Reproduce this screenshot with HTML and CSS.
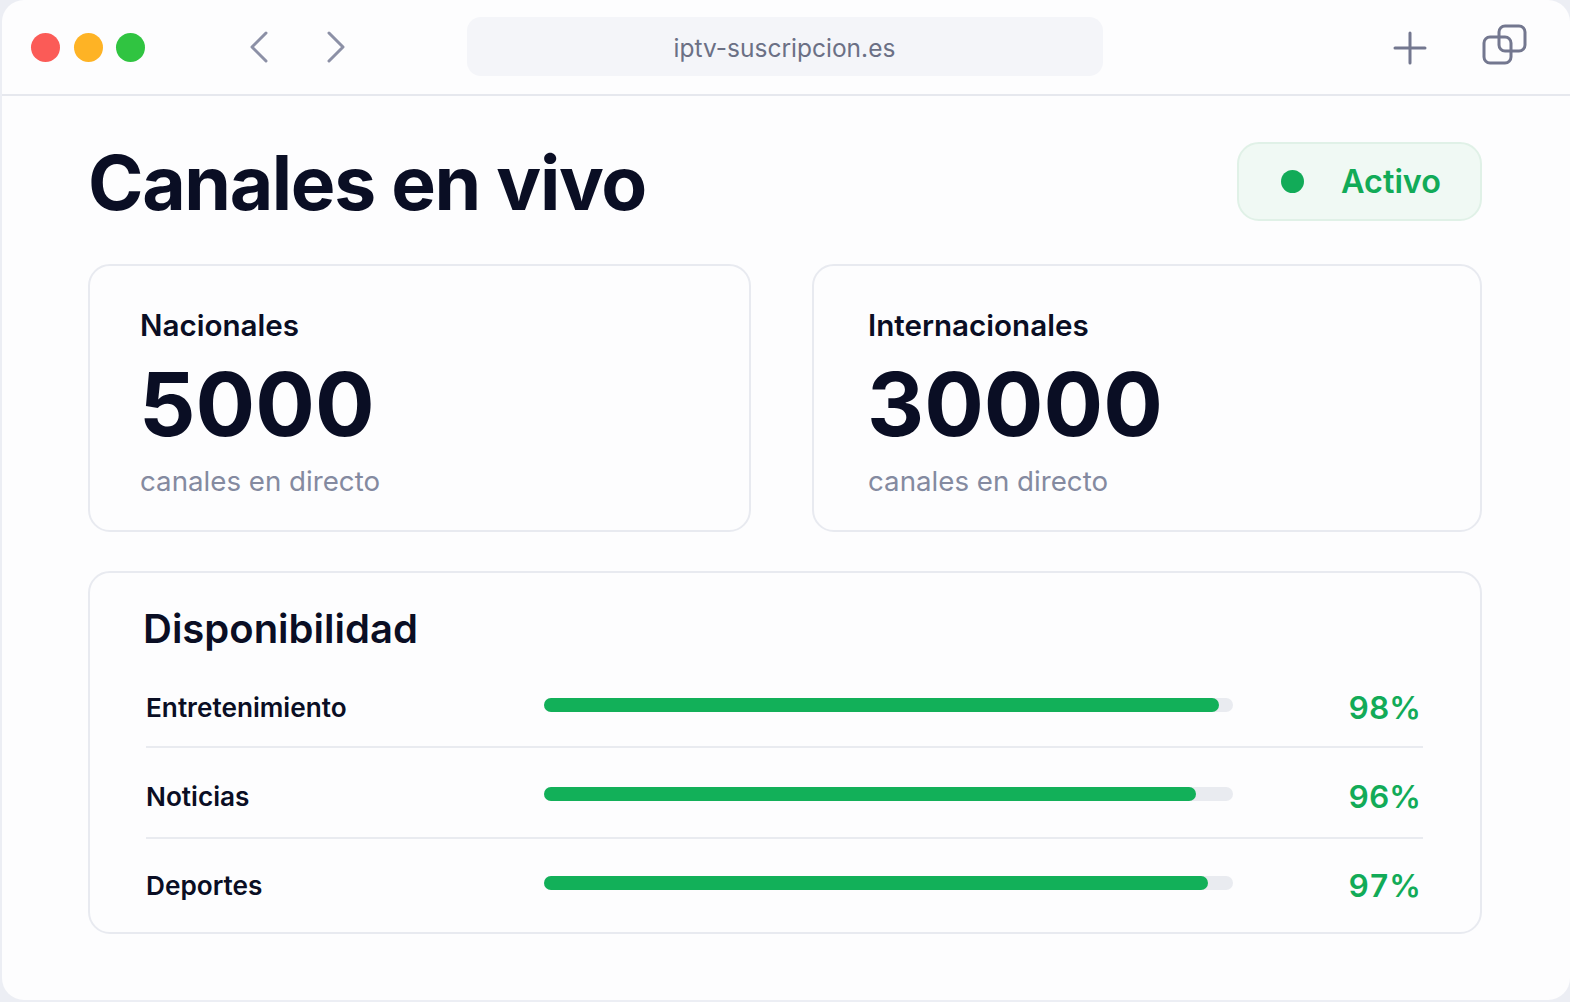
FILE: index.html
```html
<!DOCTYPE html>
<html lang="es">
<head>
  <meta charset="UTF-8" />
  <meta name="viewport" content="width=device-width, initial-scale=1.0" />
  <title>Canales en vivo</title>
  <link rel="stylesheet" href="styles.css">
</head>
<body>
  <div class="window">
    <header class="toolbar">
      <div class="dots">
        <span class="dot red"></span>
        <span class="dot yellow"></span>
        <span class="dot green"></span>
      </div>
      <div class="nav">
        <svg width="20" height="32" viewBox="0 0 20 32"><path d="M17 2 3 16l14 14" /></svg>
        <svg width="20" height="32" viewBox="0 0 20 32"><path d="M3 2l14 14L3 30" /></svg>
      </div>
      <div class="address">iptv-suscripcion.es</div>
      <div class="actions">
        <svg class="plus" width="34" height="34" viewBox="0 0 34 34"><path d="M17 2v30M2 17h30" /></svg>
        <svg class="tabs" width="46" height="42" viewBox="0 0 46 42">
          <rect x="17" y="2" width="26" height="25" rx="6" />
          <rect x="2" y="13" width="27" height="26" rx="6" />
        </svg>
      </div>
    </header>

    <main class="content">
      <div class="top">
        <h1>Canales en vivo</h1>
        <div class="badge"><span class="badge-dot"></span>Activo</div>
      </div>

      <div class="cards">
        <section class="card">
          <h3>Nacionales</h3>
          <div class="number">5000</div>
          <p>canales en directo</p>
        </section>
        <section class="card">
          <h3>Internacionales</h3>
          <div class="number">30000</div>
          <p>canales en directo</p>
        </section>
      </div>

      <section class="panel">
        <h2>Disponibilidad</h2>
        <div class="row">
          <span class="name">Entretenimiento</span>
          <div class="bar"><div class="fill" style="width: 98%"></div></div>
          <span class="pct">98%</span>
        </div>
        <div class="row">
          <span class="name">Noticias</span>
          <div class="bar"><div class="fill" style="width: 94.7%"></div></div>
          <span class="pct">96%</span>
        </div>
        <div class="row">
          <span class="name">Deportes</span>
          <div class="bar"><div class="fill" style="width: 96.3%"></div></div>
          <span class="pct">97%</span>
        </div>
      </section>
    </main>
  </div>
</body>
</html>
```

FILE: styles.css
```css
html, body {
  margin: 0;
  padding: 0;
}
body {
  width: 1570px;
  height: 1002px;
  overflow: hidden;
  background-color: #eceef4;
  font-family: Inter, 'Noto Sans', sans-serif;
  color: #0a0e24;
}
.window {
  box-sizing: border-box;
  width: 1568px;
  height: 1000px;
  margin-left: 2px;
  background-color: #fdfdfe;
  border-radius: 22px;
  overflow: hidden;
}
.toolbar {
  box-sizing: border-box;
  height: 96px;
  border-bottom: 2px solid #e6e8ee;
  display: flex;
  align-items: center;
}
.dots {
  display: flex;
  gap: 13.5px;
  margin-left: 29px;
}
.dot {
  width: 29px;
  height: 29px;
  border-radius: 50%;
}
.red { background-color: #fb5b57; }
.yellow { background-color: #feb325; }
.green { background-color: #30c441; }
.nav {
  display: flex;
  gap: 57px;
  margin-left: 103.5px;
}
.nav svg path {
  fill: none;
  stroke: #8c90a6;
  stroke-width: 3;
  stroke-linecap: round;
  stroke-linejoin: round;
}
.address {
  width: 636px;
  height: 59px;
  margin-left: 121px;
  margin-top: -2px;
  border-radius: 14px;
  background-color: #f4f5f9;
  color: #6b7085;
  font-size: 24.5px;
  line-height: 62px;
  text-align: center;
}
.actions {
  display: flex;
  align-items: center;
  margin-left: 290px;
  margin-top: 2px;
  gap: 55px;
}
.actions svg path,
.actions svg rect {
  fill: none;
  stroke: #73778f;
  stroke-width: 3;
  stroke-linecap: round;
}
.tabs {
  margin-top: -6px;
}
.content {
  padding: 46px 88px 0 86px;
}
.top {
  display: flex;
  justify-content: space-between;
  align-items: flex-start;
  height: 122px;
}
h1 {
  margin: -3px 0 0;
  font-size: 75px;
  font-weight: 700;
  line-height: 88px;
  letter-spacing: -1.35px;
}
.badge {
  box-sizing: border-box;
  width: 245px;
  height: 79px;
  display: flex;
  align-items: center;
  padding-left: 42px;
  gap: 37px;
  border: 2px solid #e0f1e7;
  border-radius: 22px;
  background-color: #f0f9f4;
  color: #12ab58;
  font-size: 32.4px;
  font-weight: 600;
}
.badge-dot {
  width: 23px;
  height: 23px;
  border-radius: 50%;
  background-color: #12ab58;
}
.cards {
  display: grid;
  grid-template-columns: 663px 670px;
  gap: 61px;
}
.card {
  box-sizing: border-box;
  height: 268px;
  padding: 41px 50px 0;
  border: 2px solid #e8eaf0;
  border-radius: 22px;
}
.card + .card {
  padding-left: 54px;
}
.card h3 {
  margin: 0;
  font-size: 29.6px;
  font-weight: 600;
  line-height: 36px;
}
.number {
  margin: 11px 0 0 -1px;
  font-size: 88.5px;
  font-weight: 700;
  line-height: 100px;
}
.card p {
  margin: 9px 0 0;
  font-size: 27.7px;
  line-height: 36px;
  color: #848aa0;
}
.panel {
  box-sizing: border-box;
  height: 363px;
  margin-top: 39px;
  padding: 30px 57px 0 56px;
  border: 2px solid #e8eaf0;
  border-radius: 22px;
}
h2 {
  margin: 0 0 11px -3px;
  font-size: 40px;
  font-weight: 600;
  line-height: 52px;
}
.row {
  display: grid;
  grid-template-columns: 398px 689px 1fr;
  align-items: center;
  height: 91px;
  padding-top: 7px;
  box-sizing: border-box;
  border-bottom: 2px solid #e9ebf0;
}
.row:first-of-type {
  height: 82px;
  padding-top: 2px;
}
.row:last-child {
  padding-top: 1px;
  border-bottom: none;
}
.name {
  font-size: 26.2px;
  font-weight: 600;
  margin-top: 1px;
}
.bar {
  height: 14px;
  margin-top: -4px;
  border-radius: 7px;
  background-color: #e9ebf0;
}
.fill {
  height: 100%;
  border-radius: 7px;
  background-color: #12b059;
}
.pct {
  font-size: 31.5px;
  font-weight: 600;
  font-variant-numeric: tabular-nums;
  color: #12ab58;
  text-align: right;
  padding-right: 2px;
  margin-top: 1px;
}
```
